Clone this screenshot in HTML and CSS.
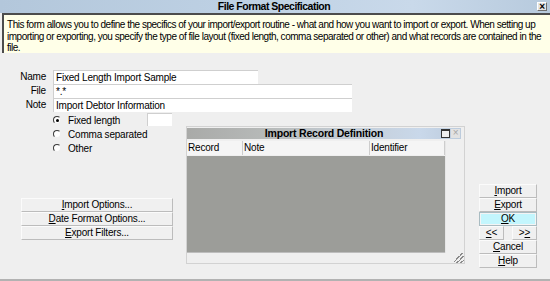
FILE: index.html
```html
<!DOCTYPE html>
<html lang="en">
<head>
<meta charset="UTF-8" />
<title>File Format Specification</title>
<link rel="stylesheet" href="styles.css">
</head>
<body>
<div class="dialog">
  <div class="titlebar">
    <span class="title">File Format Specification</span>
    <span class="closeBtn">&times;</span>
  </div>

  <div class="desc">This form allows you to define the specifics of your import/export routine - what and how you want to import or export. When setting up<br>importing or exporting, you specify the type of file layout (fixed length, comma separated or other) and what records are contained in the<br>file.</div>

  <!-- ===== fields ===== -->
  <div class="fields">
    <label class="lbl">Name</label>
    <div class="input wName">Fixed Length Import Sample</div>
    <label class="lbl">File</label>
    <div class="input wFile">*.*</div>
    <label class="lbl">Note</label>
    <div class="input wFile">Import Debtor Information</div>
  </div>

  <div class="lower">
    <div class="leftCol">
      <div class="radios">
        <div class="radioRow"><span class="radio on"></span><span class="rText">Fixed length</span><div class="input small"></div></div>
        <div class="radioRow"><span class="radio"></span><span class="rText">Comma separated</span></div>
        <div class="radioRow"><span class="radio"></span><span class="rText">Other</span></div>
      </div>
      <div class="btnStack wide">
        <div class="btn"><u>I</u>mport Options...</div>
        <div class="btn"><u>D</u>ate Format Options...</div>
        <div class="btn"><u>E</u>xport Filters...</div>
      </div>
    </div>

    <!-- ===== child window ===== -->
    <div class="child">
      <div class="childTitle">
        <span class="childName">Import Record Definition</span>
        <span class="childIcons"><span class="maxIco"></span><span class="xIco">&times;</span></span>
      </div>
      <div class="gridWrap">
        <div class="grid">
          <div class="gHead">
            <span class="col cRecord">Record</span>
            <span class="col cNote">Note</span>
            <span class="col cIdent">Identifier</span>
          </div>
          <div class="gBody"></div>
        </div>
        <div class="gSide"></div>
      </div>
      <div class="childFoot"><span class="grip"></span></div>
    </div>

    <div class="btnStack narrow">
      <div class="btn"><u>I</u>mport</div>
      <div class="btn"><u>E</u>xport</div>
      <div class="btn ok"><u>O</u>K</div>
      <div class="pair">
        <div class="btn"><u>&lt;</u>&lt;</div>
        <div class="btn">&gt;<u>&gt;</u></div>
      </div>
      <div class="btn"><u>C</u>ancel</div>
      <div class="btn"><u>H</u>elp</div>
    </div>
  </div>
</div>
</body>
</html>
```

FILE: styles.css
```css
/* ---------- reset ---------- */
*
{
  box-sizing:border-box;
  margin:0;
  padding:0;
}
body
{
  background:#efefef;
  font-family:"Liberation Sans",Arial,sans-serif;
  font-size:10px;
  letter-spacing:-0.2px;
  color:#000;
  overflow:hidden;
}
.dialog
{
  width:550px;
  height:281px;
  border-bottom:2px solid #b2b2b2;
  display:flex;
  flex-direction:column;
}

/* ===== title bar ===== */
.titlebar
{
  height:13px;
  display:flex;
  align-items:center;
  justify-content:center;
  position:relative;
  background:linear-gradient(90deg,#b3c7db 0%,#bdd0e3 40%,#c9d9ea 75%,#b7cadd 100%);
}
.title
{
  font-weight:bold;
  font-size:10.5px;
  letter-spacing:-0.5px;
  line-height:13px;
  margin-left:-2px;
}
.closeBtn
{
  position:absolute;
  right:3px;
  top:2px;
  width:10px;
  height:9px;
  border:1px solid #6e6e6e;
  border-top-color:#fff;
  border-left-color:#fff;
  background:#e4e4e4;
  font-weight:bold;
  font-size:10px;
  line-height:7px;
  text-align:center;
}

/* ===== description ===== */
.desc
{
  height:40px;
  margin-left:2px;
  border-top:2px solid #4c4c4c;
  border-left:2px solid #4c4c4c;
  background:#ffffe8;
  padding:4px 4px 0 3px;
  line-height:11.5px;
  letter-spacing:-0.48px;
  white-space:nowrap;
  overflow:hidden;
}

/* ===== fields ===== */
.fields
{
  margin-top:17px;
  display:grid;
  grid-template-columns:46px auto;
  column-gap:7px;
  justify-items:start;
}
.lbl
{
  justify-self:end;
  line-height:14px;
}
.input
{
  height:14px;
  background:#fff;
  border-top:1px solid #cfcfcf;
  border-left:1px solid #cfcfcf;
  padding-left:2px;
  line-height:13px;
  white-space:nowrap;
}
.wName{width:205px;}
.wFile{width:299px;}

/* ===== lower part ===== */
.lower
{
  display:flex;
  align-items:flex-start;
  margin-top:1px;
}
.leftCol
{
  width:186px;
  display:flex;
  flex-direction:column;
}
.radios
{
  margin-left:53px;
  display:flex;
  flex-direction:column;
}
.radioRow
{
  height:14px;
  display:flex;
  align-items:center;
  white-space:nowrap;
}
.radio
{
  width:8px;
  height:8px;
  border-radius:50%;
  border:1px solid;
  border-color:#3a3a3a #efefef #efefef #3a3a3a;
  background:#fff;
  display:flex;
  align-items:center;
  justify-content:center;
  margin-right:7px;
}
.radio.on::after
{
  content:"";
  width:3px;
  height:3px;
  border-radius:50%;
  background:#000;
}
.rText{width:79px;}
.input.small
{
  width:25px;
  height:13px;
  margin-top:-1px;
}

/* ===== buttons ===== */
.btnStack
{
  display:flex;
  flex-direction:column;
}
.btnStack.wide
{
  margin:43px 0 0 21px;
  width:152px;
}
.btnStack.narrow
{
  margin:71px 0 0 14px;
  width:58px;
}
.btn
{
  height:14px;
  line-height:12px;
  text-align:center;
  background:#f0f0f0;
  border:1px solid;
  border-color:#fbfbfb #bcbcbc #bcbcbc #fbfbfb;
  white-space:nowrap;
}
.btn.ok
{
  background:#c3f6fd;
  border:1px solid #a9bcc2;
  outline:1px solid #f4f4f4;
  outline-offset:-2px;
}
.pair
{
  display:flex;
  justify-content:space-between;
}
.pair .btn{width:25px;}

/* ===== child window ===== */
.child
{
  margin-top:13px;
  width:279px;
  height:138px;
  border:1px solid #d2d2d2;
  display:flex;
  flex-direction:column;
  background:#efefef;
}
.childTitle
{
  height:11px;
  margin:1px 3px 0 0;
  display:flex;
  align-items:center;
  justify-content:center;
  position:relative;
  background:linear-gradient(90deg,#a9aaa8 0%,#b7bab9 30%,#c4cdd6 60%,#c9d8ea 85%,#bccbdc 100%);
}
.childName
{
  font-weight:bold;
  font-size:10.5px;
  letter-spacing:-0.2px;
  line-height:11px;
}
.childIcons
{
  position:absolute;
  right:1px;
  top:1px;
  display:flex;
  gap:1px;
}
.maxIco
{
  width:9px;
  height:9px;
  border:1px solid #333;
  border-top-width:2px;
  background:#efefef;
}
.xIco
{
  width:9px;
  height:9px;
  font-size:10px;
  line-height:8px;
  text-align:center;
  color:#a6a6a6;
  background:#e2e2e2;
}
.gridWrap
{
  display:flex;
  flex:1;
  margin-top:2px;
}
.grid
{
  width:258px;
  display:flex;
  flex-direction:column;
}
.gHead
{
  height:14px;
  display:flex;
  background:#f5f5f5;
}
.col
{
  line-height:14px;
  padding-left:1px;
  border-right:1px solid #cdcdcd;
}
.cRecord{width:56px;}
.cNote{width:127px;}
.cIdent{width:75px;}
.gBody
{
  flex:1;
  margin-top:1px;
  background:#9c9d99;
  border-bottom:1px solid #bdbdbd;
}
.gSide
{
  flex:1;
  border-left:1px solid #e6e6e6;
}
.childFoot
{
  height:10px;
  display:flex;
  justify-content:flex-end;
}
.grip
{
  width:10px;
  height:10px;
  background:linear-gradient(135deg,transparent 40%,#8a8a8a 40%,#8a8a8a 48%,transparent 48%,transparent 60%,#8a8a8a 60%,#8a8a8a 68%,transparent 68%,transparent 80%,#8a8a8a 80%,#8a8a8a 88%,transparent 88%);
}
```
